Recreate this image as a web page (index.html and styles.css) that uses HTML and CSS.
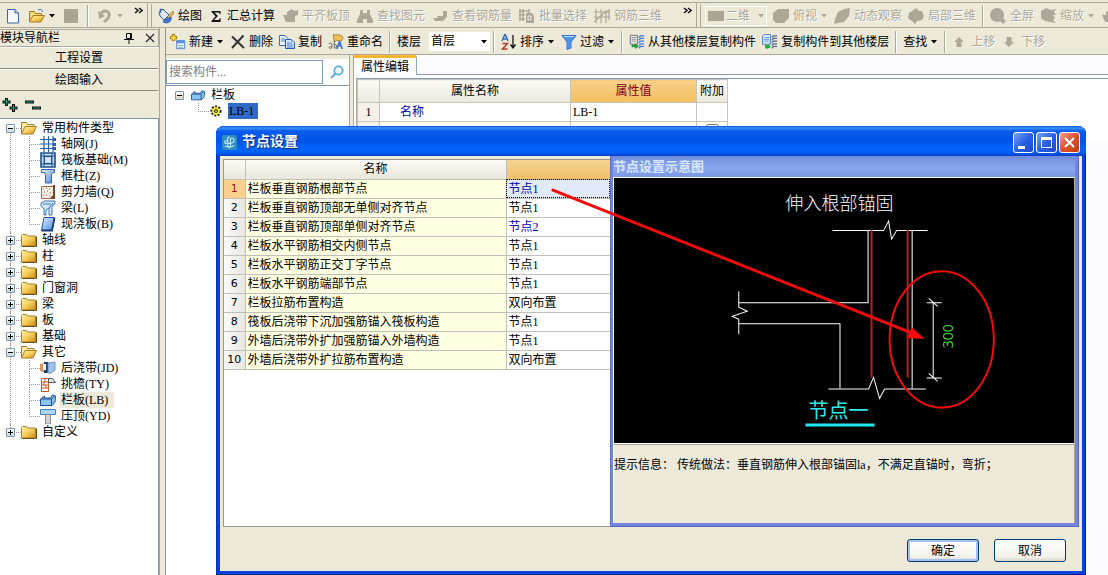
FILE: index.html
```html
<!DOCTYPE html>
<html lang="zh-CN">
<head>
<meta charset="utf-8">
<title>节点设置</title>
<link rel="stylesheet" href="styles.css">
</head>
<body>
<svg class="defs" aria-hidden="true">
  <defs>
    <linearGradient id="gold" x1="0" y1="0" x2="1" y2="1"><stop offset="0" stop-color="#fff3b0"/><stop offset=".5" stop-color="#f5cf5a"/><stop offset="1" stop-color="#c98a1c"/></linearGradient>
    <linearGradient id="blue" x1="0" y1="0" x2="1" y2="1"><stop offset="0" stop-color="#e4f2ff"/><stop offset="1" stop-color="#4a86d8"/></linearGradient>
  </defs>
  <symbol id="i-new" viewBox="0 0 16 16"><path d="M2.500 1.500h7.500l3.500 3.500v10h-11z" fill="#f4f9ff" stroke="#41649c"/><path d="M10 1.500v3.500h3.500" fill="#b8d0f0" stroke="#41649c"/></symbol>
  <symbol id="i-open" viewBox="0 0 16 16"><path d="M.5 14V3.500h5l1 2h6V8" fill="#f6d77a" stroke="#a87a1c"/><path d="M.5 14L4 7.500h11.500L12 14z" fill="url(#gold)" stroke="#a87a1c"/><path d="M9 2c3-1.500 4 0 4.500 2" fill="none" stroke="#3a68b8"/></symbol>
  <symbol id="i-folder-open" viewBox="0 0 16 14"><path d="M.5 13V1.500h5l1 2h6.500V6" fill="#fbe9a8" stroke="#a8802c"/><path d="M.5 13L4 5.500h11.500L12 13z" fill="url(#gold)" stroke="#a8802c"/></symbol>
  <symbol id="i-save" viewBox="0 0 16 16"><path d="M1 1h14v14H1z" fill="#a8a593"/></symbol>
  <symbol id="i-undo" viewBox="0 0 16 16"><path d="M4 5c5-4 9-1 8 3-.5 3-3 4-5 6" fill="none" stroke="#aca899" stroke-width="3"/><path d="M1 3l1 8 6-3z" fill="#aca899"/></symbol>
  <symbol id="i-paint" viewBox="0 0 16 16"><path d="M1 4l4-3 6 6-5 5-4-4z" fill="#dbe9fa" stroke="#345b9c"/><path d="M3 5L2 1l4 1" fill="none" stroke="#345b9c"/><path d="M15 3l-6 6 2 2 5-6z" fill="#e8b84c" stroke="#7c5a18" stroke-width=".6"/><path d="M5 14c2-4 5-4 8-5 1 3-1 6-5 6z" fill="#3f73d0" stroke="#24489a" stroke-width=".6"/></symbol>
  <symbol id="i-sum" viewBox="0 0 12 16"><path d="M1.500 3h9v3h-1L9 4.500H4.500L8 8l-4 4h5l.7-1.700h1L10.500 14h-9v-1L5.500 8.300 1.500 4z" fill="#111"/></symbol>
  <symbol id="i-g1" viewBox="0 0 16 16"><path d="M1 7h4V4l5-3 2 2 4-1v5l-3 1v6H4z" fill="#aca899"/></symbol>
  <symbol id="i-find" viewBox="0 0 16 16"><path d="M3 2h3v3h4V2h3v4l3 6v3h-6v-4H6v4H0v-3l3-6z" fill="#aca899"/></symbol>
  <symbol id="i-view" viewBox="0 0 16 16"><path d="M1 10h5l-1-2h6V3h4v6l-4 4H3z" fill="#aca899"/></symbol>
  <symbol id="i-batch" viewBox="0 0 16 16"><path d="M1 1v12M4 1v12M0 3h10M0 7h6M0 11h6M10 1v4" stroke="#aca899" stroke-width="1.500" fill="none"/><path d="M7 5h6l2 3v7H7z" fill="#aca899"/><path d="M9 8h3v4H9z" fill="none" stroke="#ece9d8"/></symbol>
  <symbol id="i-mesh" viewBox="0 0 16 16"><path d="M2 1v14M7 1v14M12 2v13M15 1v11M0 4h16M0 9h16M0 14l6-5 4-4 6-3" stroke="#aca899" stroke-width="1.200" fill="none"/></symbol>
  <symbol id="i-rect" viewBox="0 0 16 16"><path d="M0 3h16v10H0z" fill="#a8a593"/></symbol>
  <symbol id="i-cube" viewBox="0 0 16 16"><path d="M0 5l5-4h11v9l-5 5H3l-3-3z" fill="#aca899"/></symbol>
  <symbol id="i-orbit" viewBox="0 0 16 16"><path d="M16 0l-1 8-5 6-6 1-4 1 1-5L4 4l6-3z" fill="#aca899"/></symbol>
  <symbol id="i-part" viewBox="0 0 16 16"><path d="M8 0l3 3h3l2 5-2 4-5 1-2 3-3-3-4-3 1-5 3-2z" fill="#aca899"/></symbol>
  <symbol id="i-lens" viewBox="0 0 16 16"><circle cx="7" cy="7" r="7" fill="#aca899"/><path d="M9 12l3-3 4 4-3 3z" fill="#aca899"/></symbol>
  <symbol id="i-zoom" viewBox="0 0 16 16"><path d="M1 3l5-3 5 2 5-1-2 3 2 3h-3l2 3-2 2 3 3-6-1-5-1-4-3z" fill="#aca899"/></symbol>
  <symbol id="i-add" viewBox="0 0 18 18"><path d="M7.500 7.500h9v9h-9z" fill="#eaf3ff" stroke="#4a78c0"/><path d="M7.500 7.500h9v3h-9z" fill="#5a90e0"/><path d="M9 13h6M9 15h6" stroke="#8ab"/><path d="M4 0v8M0 4h8" stroke="#9a7410" stroke-width="3.600"/><path d="M4 1v6M1 4h6" stroke="#ffe23c" stroke-width="2"/></symbol>
  <symbol id="i-del" viewBox="0 0 16 16"><path d="M2 2.500L14 14M13.500 1.500L2 14" stroke="#333" stroke-width="2"/></symbol>
  <symbol id="i-copy" viewBox="0 0 16 16"><path d="M.5 1.500H6l3 3v7H.5z" fill="#e8f2ff" stroke="#3c6ab0"/><path d="M6.500 5.500H12l3.500 3v6h-9z" fill="#cfe2fb" stroke="#2a58b0"/><path d="M8 9h5M8 11h6M8 13h6M2 5h4M2 7h4" stroke="#4a7fd0"/></symbol>
  <symbol id="i-ren" viewBox="0 0 18 18"><path d="M6 1h8l3 3-2 4-5-1-3 2z" fill="#efc05a" stroke="#946418" stroke-width=".8"/><path d="M1 11c3-2 4 0 3 5-3 1-4-2 0-2M7 8v8c4 0 3-5 0-4" fill="none" stroke="#666" stroke-width="1.100"/><path d="M9 17l3-9h2l3 9h-2l-1-3h-2l-1 3z" fill="#3f7ad8"/></symbol>
  <symbol id="i-sort" viewBox="0 0 16 16"><path d="M1 7l3-7 3 7M2 5h4" fill="none" stroke="#356ab5" stroke-width="1.500"/><path d="M1.500 9.500h5l-5 5.500h5" fill="none" stroke="#b33a34" stroke-width="1.500"/><path d="M12 1v12M9.500 10.500L12 14l2.500-3.500" fill="none" stroke="#111" stroke-width="1.300"/></symbol>
  <symbol id="i-filter" viewBox="0 0 16 16"><path d="M1 1.500h14L10 8v6l-4 1.500V8z" fill="#4f94ec" stroke="#3873c8"/><path d="M3 2.500h10" stroke="#bfe0ff"/></symbol>
  <symbol id="i-from" viewBox="0 0 18 18"><path d="M1.500 1.500h8v10h-8z" fill="#e8eee8" stroke="#667"/><path d="M3 4h5M3 6h5M3 8h5" stroke="#889"/><path d="M3 12h4v-2l4 4-4 3v-2H3z" fill="#1c9a3c"/><path d="M11 4l2-2h4M11 7l2-2h4M11 10l2-2h4M11 13l2-2h4M11 16l2-2h4" stroke="#3d78d0" stroke-width="1.400" fill="none"/></symbol>
  <symbol id="i-to" viewBox="0 0 18 18"><path d="M2.500.5h7v11h-9v-9z" fill="#dceaff" stroke="#3f70c8"/><path d="M3 4h5M2 6h6M2 8h6" stroke="#5a90e0"/><path d="M4 12h4l2 3-5 2-2-3z" fill="#22aa3c"/><path d="M11 4l2-2h4M11 7l2-2h4M11 10l2-2h4M11 13l2-2h4M11 16l2-2h4" stroke="#5a6684" stroke-width="1.400" fill="none"/></symbol>
  <symbol id="i-up" viewBox="0 0 12 12"><path d="M6 1l5 5H8.500v5h-5V6H1z" fill="#aca899"/></symbol>
  <symbol id="i-down" viewBox="0 0 12 12"><path d="M6 11l5-5H8.500V1h-5v5H1z" fill="#aca899"/></symbol>
  <symbol id="i-caret" viewBox="0 0 6 4"><path d="M0 0h6L3 3.500z" fill="currentColor"/></symbol>
  <symbol id="i-more" viewBox="0 0 9 8"><path d="M1 1l3 2.500L1 6M5 1l3 2.500L5 6" fill="none" stroke="#111" stroke-width="1.500"/></symbol>
  <symbol id="i-pin" viewBox="0 0 10 12"><path d="M2.500 1.500h5v5h-5zM6.500 1v6M0 7.500h10M5 8v4" fill="none" stroke="#111"/></symbol>
  <symbol id="i-x" viewBox="0 0 10 10"><path d="M1 1l8 8M9 1L1 9" stroke="#222" stroke-width="1.100"/></symbol>
  <symbol id="i-expand" viewBox="0 0 16 16"><path d="M4.500 1v8M.5 5h8M11.500 7v8M7.500 11h8" stroke="#111" stroke-width="3"/><path d="M4.500 2v6M1.500 5h6M11.500 8v6M8.500 11h6" stroke="#1f9a78" stroke-width="1"/></symbol>
  <symbol id="i-collapse" viewBox="0 0 16 16"><path d="M0 5h9M7 11h9" stroke="#111" stroke-width="3"/><path d="M1 5h7M8 11h7" stroke="#1f9a78"/></symbol>
  <symbol id="i-search" viewBox="0 0 14 14"><circle cx="8.500" cy="5.500" r="4.200" fill="#eaf7ff" stroke="#62acdc" stroke-width="1.800"/><path d="M5.500 8.500L1 13" stroke="#62acdc" stroke-width="2.200"/></symbol>
  <symbol id="i-folder" viewBox="0 0 16 14"><path d="M.5 13V2.500l1-1h4l1 1.500h8v10z" fill="url(#gold)" stroke="#a8802c"/><path d="M1 13.500h14.500V3.500" fill="none" stroke="#6e5010"/></symbol>
  <symbol id="i-grid" viewBox="0 0 16 16"><path d="M4 0v16M8.500 0v16M13 0v16M0 3.500h14M0 8h14M0 12.500h14" stroke="#2c5cb0" stroke-width="1.200"/><path d="M13 2h3v3h-3zM13 7h3v3h-3zM13 11h3v3h-3z" fill="#2c5cb0"/></symbol>
  <symbol id="i-raft" viewBox="0 0 16 16"><path d="M1 1h14v14H1z" fill="#cfe6fa" stroke="#1c4c96" stroke-width="1.600"/><path d="M4.500 4.500h7v7h-7zM4 1v14M12 1v14M1 4h14M1 12h14" fill="none" stroke="#1c4c96"/></symbol>
  <symbol id="i-col" viewBox="0 0 16 16"><path d="M1.500 1.500h13v3h-2l-1 2V15h-6V6.500l-1-2h-3z" fill="url(#blue)" stroke="#3060b8"/></symbol>
  <symbol id="i-wall" viewBox="0 0 16 16"><path d="M1.500 2.500h12v12h-12z" fill="#fbeee4" stroke="#a36848"/><path d="M14 1v14M11 14l3-2" stroke="#7a4028" stroke-width="2"/><path d="M3 5h1M6 4h1M9 5h1M4 8h1M7 7h1M10 9h1M3 11h1M6 11h1M9 12h1" stroke="#a36848"/></symbol>
  <symbol id="i-beam" viewBox="0 0 16 16"><path d="M1 3l4-2h10v3l-3 2v9H9V8L6 10v5H4V9L1 6z" fill="#cfe6fa" stroke="#3f78b8"/><path d="M3 4h8M9 8l4-5" stroke="#3f78b8"/></symbol>
  <symbol id="i-slab" viewBox="0 0 16 16"><path d="M4 1.500h10.500L12 14.500H1.500z" fill="url(#blue)" stroke="#27529c"/><path d="M1.500 14.500H12L14.500 2" stroke="#173a7c" stroke-width="1.800" fill="none"/></symbol>
  <symbol id="i-strip" viewBox="0 0 16 16"><path d="M0 4l4-1v9l-4-1z" fill="#e09060"/><path d="M4 2h4v11H4z" fill="#283c60"/><path d="M8 3l7-1v8l-4 3H8z" fill="#9cc4ee" stroke="#5d82b4" stroke-width=".8"/><path d="M3 4h3v6H3z" fill="#fff"/></symbol>
  <symbol id="i-eave" viewBox="0 0 16 16"><path d="M1.500 2.500h7v13h-7z" fill="#fff" stroke="#c4562c"/><path d="M1 6h8M1 9h8M1 12h8M5 3v3M4 6v3M6 9v3" stroke="#c4562c"/><path d="M8.500 2.500h4l3 4h-7z" fill="#e8e4dc" stroke="#555"/></symbol>
  <symbol id="i-rail" viewBox="0 0 16 16"><path d="M.5 7l4-3v2h6l2-3 3 1-.5 6-3 3.500H.5z" fill="#8cc4f0" stroke="#1c4f90"/><path d="M1 7h10.500v6.500M11.500 7l3-3" stroke="#1c4f90" fill="none"/></symbol>
  <symbol id="i-cap" viewBox="0 0 16 16"><path d="M.5 1.500h15v5H.5z" fill="#a8d4f8" stroke="#4a7cb4"/><path d="M5.500 6.500h5V16h-5z" fill="#d4d4d4" stroke="#888"/></symbol>
  <symbol id="i-gear" viewBox="0 0 12 12"><circle cx="6" cy="6" r="4.500" fill="#f8ec30" stroke="#222" stroke-width="2.200" stroke-dasharray="1.900 1.400"/><circle cx="6" cy="6" r="3.600" fill="#f8ec30"/><circle cx="6" cy="6" r="1.500" fill="none" stroke="#222"/></symbol>
  <symbol id="i-app" viewBox="0 0 16 16"><rect width="16" height="16" rx="2" fill="#2e8cc4"/><path d="M8 2c-2 0-2 2-2 3v7c0 2 3 2 3 0V5c0-3 4-2 4 1s-5 3-8 3-3-3 0-3M3 12c4 1 8 1 10-1" fill="none" stroke="#bfeaf4" stroke-width="1.200"/></symbol>
</svg>

<main class="app">
  <div class="bar bar-top" role="toolbar" aria-label="主工具栏">
    <div class="group file-group">
      <button class="tool" aria-label="新建文件"><svg class="ico"><use href="#i-new"/></svg></button>
      <button class="tool" aria-label="打开"><svg class="ico"><use href="#i-open"/></svg><svg class="caret"><use href="#i-caret"/></svg></button>
      <button class="tool" aria-label="保存" disabled><svg class="ico"><use href="#i-save"/></svg></button>
      <span class="sep"></span>
      <button class="tool" aria-label="撤销" disabled><svg class="ico"><use href="#i-undo"/></svg><svg class="caret"><use href="#i-caret"/></svg></button>
      <button class="more" aria-label="更多"><svg class="chev"><use href="#i-more"/></svg></button>
    </div>
    <div class="group draw-group">
      <button class="tool"><svg class="ico"><use href="#i-paint"/></svg>绘图</button>
      <button class="tool"><svg class="sigma"><use href="#i-sum"/></svg>汇总计算</button>
      <button class="tool" disabled><svg class="ico"><use href="#i-g1"/></svg>平齐板顶</button>
      <button class="tool" disabled><svg class="ico"><use href="#i-find"/></svg>查找图元</button>
      <button class="tool" disabled><svg class="ico"><use href="#i-view"/></svg>查看钢筋量</button>
      <button class="tool" disabled><svg class="ico"><use href="#i-batch"/></svg>批量选择</button>
      <button class="tool" disabled><svg class="ico"><use href="#i-mesh"/></svg>钢筋三维</button>
      <button class="more" aria-label="更多"><svg class="chev"><use href="#i-more"/></svg></button>
    </div>
    <div class="group view-group">
      <button class="tool boxed" disabled><svg class="ico"><use href="#i-rect"/></svg>二维<svg class="caret"><use href="#i-caret"/></svg></button>
      <button class="tool" disabled><svg class="ico"><use href="#i-cube"/></svg>俯视<svg class="caret"><use href="#i-caret"/></svg></button>
      <button class="tool" disabled><svg class="ico"><use href="#i-orbit"/></svg>动态观察</button>
      <button class="tool" disabled><svg class="ico"><use href="#i-part"/></svg>局部三维</button>
      <span class="sep"></span>
      <button class="tool" disabled><svg class="ico"><use href="#i-lens"/></svg>全屏</button>
      <button class="tool" disabled><svg class="ico"><use href="#i-zoom"/></svg>缩放<svg class="caret"><use href="#i-caret"/></svg></button>
      <button class="tool" disabled aria-label="平移"><svg class="ico"><use href="#i-g1"/></svg></button>
    </div>
  </div>

  <div class="work">
    <aside class="nav">
      <header class="nav-title"><span class="nav-name">模块导航栏</span><button class="mini" aria-label="固定"><svg class="pin"><use href="#i-pin"/></svg></button><button class="mini" aria-label="关闭"><svg class="cross"><use href="#i-x"/></svg></button></header>
      <button class="section">工程设置</button>
      <button class="section">绘图输入</button>
      <div class="nav-tools"><button class="mini" aria-label="全部展开"><svg class="ico"><use href="#i-expand"/></svg></button><button class="mini" aria-label="全部折叠"><svg class="ico"><use href="#i-collapse"/></svg></button></div>
      <ul class="tree main-tree">
        <li><div class="row"><button class="toggle" aria-label="折叠"></button><svg class="ico"><use href="#i-folder-open"/></svg><span>常用构件类型</span></div>
          <ul>
            <li><svg class="ico"><use href="#i-grid"/></svg><span>轴网(J)</span></li>
            <li><svg class="ico"><use href="#i-raft"/></svg><span>筏板基础(M)</span></li>
            <li><svg class="ico"><use href="#i-col"/></svg><span>框柱(Z)</span></li>
            <li><svg class="ico"><use href="#i-wall"/></svg><span>剪力墙(Q)</span></li>
            <li><svg class="ico"><use href="#i-beam"/></svg><span>梁(L)</span></li>
            <li><svg class="ico"><use href="#i-slab"/></svg><span>现浇板(B)</span></li>
          </ul></li>
        <li><div class="row"><button class="toggle plus" aria-label="展开"></button><svg class="ico"><use href="#i-folder"/></svg><span>轴线</span></div></li>
        <li><div class="row"><button class="toggle plus" aria-label="展开"></button><svg class="ico"><use href="#i-folder"/></svg><span>柱</span></div></li>
        <li><div class="row"><button class="toggle plus" aria-label="展开"></button><svg class="ico"><use href="#i-folder"/></svg><span>墙</span></div></li>
        <li><div class="row"><button class="toggle plus" aria-label="展开"></button><svg class="ico"><use href="#i-folder"/></svg><span>门窗洞</span></div></li>
        <li><div class="row"><button class="toggle plus" aria-label="展开"></button><svg class="ico"><use href="#i-folder"/></svg><span>梁</span></div></li>
        <li><div class="row"><button class="toggle plus" aria-label="展开"></button><svg class="ico"><use href="#i-folder"/></svg><span>板</span></div></li>
        <li><div class="row"><button class="toggle plus" aria-label="展开"></button><svg class="ico"><use href="#i-folder"/></svg><span>基础</span></div></li>
        <li><div class="row"><button class="toggle" aria-label="折叠"></button><svg class="ico"><use href="#i-folder-open"/></svg><span>其它</span></div>
          <ul>
            <li><svg class="ico"><use href="#i-strip"/></svg><span>后浇带(JD)</span></li>
            <li><svg class="ico"><use href="#i-eave"/></svg><span>挑檐(TY)</span></li>
            <li><svg class="ico"><use href="#i-rail"/></svg><span class="current">栏板(LB)</span></li>
            <li><svg class="ico"><use href="#i-cap"/></svg><span>压顶(YD)</span></li>
          </ul></li>
        <li><div class="row"><button class="toggle plus" aria-label="展开"></button><svg class="ico"><use href="#i-folder"/></svg><span>自定义</span></div></li>
      </ul>
    </aside>

    <section class="content">
      <div class="bar bar-edit" role="toolbar" aria-label="构件工具栏">
        <button class="tool"><svg class="ico"><use href="#i-add"/></svg>新建<svg class="caret"><use href="#i-caret"/></svg></button>
        <button class="tool"><svg class="ico"><use href="#i-del"/></svg>删除</button>
        <button class="tool"><svg class="ico"><use href="#i-copy"/></svg>复制</button>
        <button class="tool"><svg class="ico"><use href="#i-ren"/></svg>重命名</button>
        <span class="sep"></span>
        <label class="floor-label" for="floor">楼层</label>
        <span class="pick"><select id="floor"><option>首层</option></select><svg class="caret"><use href="#i-caret"/></svg></span>
        <span class="sep"></span>
        <button class="tool"><svg class="ico"><use href="#i-sort"/></svg>排序<svg class="caret"><use href="#i-caret"/></svg></button>
        <button class="tool"><svg class="ico"><use href="#i-filter"/></svg>过滤<svg class="caret"><use href="#i-caret"/></svg></button>
        <span class="sep"></span>
        <button class="tool"><svg class="ico"><use href="#i-from"/></svg>从其他楼层复制构件</button>
        <button class="tool"><svg class="ico"><use href="#i-to"/></svg>复制构件到其他楼层</button>
        <span class="sep"></span>
        <button class="tool">查找<svg class="caret"><use href="#i-caret"/></svg></button>
        <span class="sep"></span>
        <button class="tool move" disabled><svg class="arrow"><use href="#i-up"/></svg>上移</button>
        <button class="tool move" disabled><svg class="arrow"><use href="#i-down"/></svg>下移</button>
      </div>
      <div class="panes">
        <div class="parts">
          <div class="search"><input type="text" placeholder="搜索构件..." aria-label="搜索构件"><button class="mini" aria-label="搜索"><svg class="glass"><use href="#i-search"/></svg></button></div>
          <ul class="tree part-tree">
            <li><div class="row"><button class="toggle" aria-label="折叠"></button><svg class="ico"><use href="#i-rail"/></svg><span>栏板</span></div>
              <ul><li><svg class="gear"><use href="#i-gear"/></svg><span class="picked">LB-1</span></li></ul></li>
          </ul>
        </div>
        <div class="props">
          <div class="tabs"><button class="tab">属性编辑</button></div>
          <div class="sheet">
            <table class="prop-table">
              <thead><tr><th class="c-no"></th><th class="c-name">属性名称</th><th class="c-val active">属性值</th><th class="c-add">附加</th></tr></thead>
              <tbody>
                <tr><th class="c-no">1</th><td class="link">名称</td><td>LB-1</td><td></td></tr>
                <tr><th class="c-no"></th><td></td><td></td><td class="check"><input type="checkbox" aria-label="附加"></td></tr>
              </tbody>
            </table>
          </div>
        </div>
      </div>
    </section>
  </div>

  <section class="dialog" role="dialog" aria-labelledby="dlg-title">
    <header class="dlg-bar">
      <svg class="app-ico"><use href="#i-app"/></svg><h1 id="dlg-title">节点设置</h1>
      <button class="win" aria-label="最小化"><svg viewBox="0 0 19 19"><path d="M4 13h7v3H4z" fill="#fff"/></svg></button>
      <button class="win" aria-label="最大化"><svg viewBox="0 0 19 19"><path d="M4.500 5.500h10v9h-10zM4 5h11" fill="none" stroke="#fff"/><path d="M4 4h11v3H4z" fill="#fff"/></svg></button>
      <button class="win close" aria-label="关闭"><svg viewBox="0 0 19 19"><path d="M5 5l9 9M14 5l-9 9" stroke="#fff" stroke-width="2.200"/></svg></button>
    </header>
    <div class="dlg-body">
      <div class="node-box">
        <table class="node-table">
          <thead><tr><th class="n-no"></th><th class="n-name">名称</th><th class="active"></th></tr></thead>
          <tbody>
            <tr><th class="on">1</th><td class="name">栏板垂直钢筋根部节点</td><td class="focus link">节点1</td></tr>
            <tr><th>2</th><td class="name">栏板垂直钢筋顶部无单侧对齐节点</td><td>节点1</td></tr>
            <tr><th>3</th><td class="name">栏板垂直钢筋顶部单侧对齐节点</td><td class="link">节点2</td></tr>
            <tr><th>4</th><td class="name">栏板水平钢筋相交内侧节点</td><td>节点1</td></tr>
            <tr><th>5</th><td class="name">栏板水平钢筋正交丁字节点</td><td>节点1</td></tr>
            <tr><th>6</th><td class="name">栏板水平钢筋端部节点</td><td>节点1</td></tr>
            <tr><th>7</th><td class="name">栏板拉筋布置构造</td><td>双向布置</td></tr>
            <tr><th>8</th><td class="name">筏板后浇带下沉加强筋锚入筏板构造</td><td>节点1</td></tr>
            <tr><th>9</th><td class="name">外墙后浇带外扩加强筋锚入外墙构造</td><td>节点1</td></tr>
            <tr><th>10</th><td class="name">外墙后浇带外扩拉筋布置构造</td><td>双向布置</td></tr>
          </tbody>
        </table>
      </div>
      <section class="preview">
        <h2>节点设置示意图</h2>
        <div class="canvas">
          <svg class="drawing" viewBox="0 0 459 264">
            <text class="cad-title" x="171" y="32">伸入根部锚固</text>
            <g class="cad">
              <path d="M218 52.500H269L274 43L277 61L282 52.500H313"/>
              <path d="M253.500 52V124.500H124.500M297.500 52V210M124.500 145.500H225.500V210"/>
              <path d="M124.500 113V129L133 133L118 138L124.500 141V156"/>
              <path d="M214 210.500H254L259 199L265 220L270 210.500H311"/>
              <path d="M318.500 124V199M312 124.500H327M312 199.500H327M314 120L323 128M314 195L323 203"/>
            </g>
            <path class="rebar" d="M257 52V199M293 52V199"/>
            <text class="cad-dim" transform="translate(338 170) rotate(-90)">300</text>
            <text class="cad-label" x="194" y="239">节点一</text>
            <path class="cad-under" d="M191 246.500H260"/>
            <ellipse class="mark" cx="327" cy="161" rx="52" ry="68"/>
            <path class="mark arrow-line" d="M-61 12L298 155"/>
            <path class="arrow-head" d="M310 160.500L293 160L297 149z"/>
          </svg>
        </div>
        <p class="tip">提示信息： 传统做法：垂直钢筋伸入根部锚固la，不满足直锚时，弯折；</p>
      </section>
    </div>
    <footer class="dlg-foot"><button class="btn primary">确定</button><button class="btn">取消</button></footer>
  </section>
</main>
</body>
</html>
```

FILE: styles.css
```css
* { box-sizing: border-box; }

body {
  margin: 0;
  background: #ece9d8;
  color: #000;
  font: 12px/16px "Liberation Serif", "Noto Sans CJK SC", sans-serif;
}

button, input, select { font: inherit; color: inherit; }
button { background: none; border: 0; padding: 0; margin: 0; white-space: nowrap; }
ul { list-style: none; margin: 0; padding: 0; }
table { border-collapse: collapse; table-layout: fixed; }
svg { flex: none; display: block; }

.defs { position: absolute; width: 0; height: 0; }
.ico { width: 16px; height: 16px; }
.caret { width: 6px; height: 4px; }
.chev { width: 9px; height: 8px; }
.sigma { width: 14px; height: 16px; }
.arrow { width: 12px; height: 12px; }
.pin { width: 10px; height: 12px; }
.cross { width: 10px; height: 10px; }
.glass { width: 14px; height: 14px; }
.gear { width: 12px; height: 12px; }

.app {
  position: relative;
  display: flex;
  flex-direction: column;
  height: 100vh;
  min-height: 540px;
  overflow: hidden;
}

/* toolbars */
.bar { display: flex; align-items: center; background: #ece9d8; white-space: nowrap; overflow: hidden; flex: none; }
.bar-top { height: 28px; padding-top: 2px; border-bottom: 1px solid #aca899; }
.group {
  display: flex;
  align-items: center;
  gap: 7px;
  height: 25px;
  flex: none;
  padding-top: 1px;
  border-top: 1px solid #aca899;
  border-right: 1px solid #aca899;
}
.file-group { width: 148px; gap: 8px; padding-left: 5px; }
.draw-group { width: 549px; }
.view-group { flex: 1 0 auto; border-right: 0; gap: 6px; }
.draw-group::before, .view-group::before { content: ""; width: 1px; height: 24px; margin-left: 3px; background: #aca899; }
.view-group::before { margin-right: -2px; }
.draw-group::before { margin-right: -1px; }
.more { margin: 3px 4px 0 auto; align-self: flex-start; }
.tool { display: flex; align-items: center; gap: 4px; height: 22px; flex: none; }
.tool:disabled { color: #aca899; text-shadow: 1px 1px #fff; }
.boxed { border: 1px solid #fff; height: 20px; padding: 0 2px; gap: 2px; }
.boxed .caret { margin-left: 6px; }
.view-group .tool .caret { margin-right: 1px; }
.view-group .boxed .caret { margin-right: 0; }
.sep { width: 2px; height: 22px; flex: none; border-left: 1px solid #aca899; border-right: 1px solid #fff; }

.bar-edit { height: 27px; padding: 1px 0 0 4px; gap: 6px; border-bottom: 1px solid #aca899; }
.bar-edit .tool { gap: 3px; }
.bar-edit .tool .caret { margin: 0 1px; }
.bar-edit .move { gap: 6px; padding: 0 1px; }
.pick { position: relative; display: block; width: 61px; margin-right: -3px; margin-left: 2px; }
.pick select { display: block; appearance: none; width: 100%; height: 19px; padding: 0 2px; border: 0; border-radius: 0; background: #fff; line-height: 17px; }
.pick .caret { position: absolute; right: 3px; top: 8px; pointer-events: none; }

/* layout */
.work { display: flex; flex: 1; min-height: 0; }
.nav { width: 160px; flex: none; display: flex; flex-direction: column; border-right: 1px solid #aca899; }
.content { flex: 1; min-width: 0; margin-left: 5px; display: flex; flex-direction: column; border-left: 1px solid #8296a8; }
.panes { flex: 1; display: flex; min-height: 0; }

/* module navigator */
.nav-title { display: flex; align-items: center; gap: 11px; height: 18px; margin-top: 1px; padding-right: 3px; border: 1px solid #aca899; border-left: 0; }
.nav-name { flex: 1; }
.mini { display: block; }
.section { height: 22px; line-height: 20px; margin-right: 1px; border-top: 1px solid #fff; border-bottom: 1px solid #8c897c; text-align: center; }
.nav-tools { display: flex; gap: 7px; padding: 6px 2px; height: 27px; }
.main-tree { flex: 1; padding-top: 1px; background: #fff; border-top: 1px solid #8296a8; border-right: 1px solid #8296a8; overflow: hidden; }

.tree li { position: relative; }
.tree .row, .tree li li { display: flex; align-items: center; height: 16px; line-height: 16px; white-space: nowrap; }
.row { padding-left: 6px; }
.row .ico { margin-left: 6px; height: 14px; }
.row span { margin-left: 5px; }
.row .toggle { position: relative; z-index: 1; width: 9px; height: 9px; border: 1px solid #7d94b0; border-radius: 1px; background: linear-gradient(#fff, #d8d4c8); }
.toggle::before, .toggle.plus::after { content: ""; position: absolute; background: #000; left: 1px; top: 3px; width: 5px; height: 1px; }
.toggle.plus::after { left: 3px; top: 1px; width: 1px; height: 5px; }
.tree > li::before { content: ""; position: absolute; left: 10px; top: 0; bottom: 0; border-left: 1px dotted #999; }
.tree > li:first-child::before { top: 8px; }
.tree > li:last-child::before { bottom: auto; height: 8px; }
.row::after { content: ""; position: absolute; left: 16px; top: 8px; width: 5px; border-top: 1px dotted #999; }
.tree li li { padding-left: 40px; }
.tree li li span { margin-left: 4px; padding: 0 1px; }
.tree li li::before { content: ""; position: absolute; left: 29px; top: 0; width: 10px; height: 8px; border-left: 1px dotted #999; border-bottom: 1px dotted #999; }
.tree li li:not(:last-child)::after { content: ""; position: absolute; left: 29px; top: 8px; height: 8px; border-left: 1px dotted #999; }
.tree .current { background: #ece9d8; padding-right: 6px; }

/* component list */
.parts { width: 184px; flex: none; display: flex; flex-direction: column; padding-top: 4px; border-right: 1px solid #aca899; }
.search { display: flex; align-items: center; height: 26px; padding-right: 5px; gap: 7px; background: #fff; }
.search input { flex: 1; min-width: 0; height: 24px; padding: 0 2px; border: 1px solid #7f9db9; background: #fff; outline: 0; line-height: 20px; }
.search input::placeholder { color: #808080; opacity: 1; }
.part-tree { flex: 1; background: #fff; border-top: 1px solid #8296a8; padding: 1px 0 0 3px; }
.part-tree > li > .row::after { display: none; }
.part-tree > li::before { display: none; }
.part-tree li li { padding-left: 41px; }
.tree .picked { background: #316ac5; padding: 0 4px 0 1px; margin-left: 6px; }

/* property editor */
.props { flex: 1; min-width: 0; margin-left: 3px; background: #fcfcfe; border-left: 1px solid #aca899; }
.tabs { height: 20px; border-bottom: 1px solid #8c9aa8; }
.tab { height: 20px; padding: 0 7px; margin-left: -1px; border: 1px solid #91a7b4; border-top: 3px solid #ffb62c; border-bottom: 0; border-radius: 2px 2px 0 0; background: #fcfcfe; line-height: 14px; }
.sheet { margin: 3px 0 0 2px; border-top: 1px solid #7f9db9; border-left: 1px solid #aca899; background: #fff; }
.prop-table { width: 370px; }
.prop-table th, .prop-table td { height: 19px; padding: 0 2px; border: 1px solid #c8c5b8; text-align: left; font-weight: normal; line-height: 16px; }
.prop-table thead th { height: 23px; text-align: center; background: linear-gradient(#fbfaf6, #ebe8dd); padding: 0; }
.prop-table tbody th { background: #f3f1e9; text-align: center; }
.c-no { width: 22px; }
.c-name { width: 191px; }
.c-val { width: 126px; }
.c-add { width: 31px; }
.prop-table thead .active { background: linear-gradient(#f9d08a, #f3c060); color: #800020; }
.prop-table td.link { padding-left: 20px; }
.link { color: #0000b4; }
.prop-table .check { text-align: center; }
.check input { width: 13px; height: 13px; margin: 1px 0 0; vertical-align: top; }

/* dialog window */
.dialog {
  position: absolute;
  inset: 126px 22px 0 216px;
  display: flex;
  flex-direction: column;
  padding: 0 4px 4px;
  border-radius: 8px 8px 0 0;
  background: #0842d8;
  box-shadow: inset 1px 0 #0a2fc0, inset -1px -1px #001ea0;
}
.dlg-bar {
  display: flex;
  align-items: center;
  gap: 2px;
  height: 30px;
  flex: none;
  margin: 0 -4px;
  padding: 2px 6px 0 6px;
  border-radius: 8px 8px 0 0;
  background: linear-gradient(#0a50d8 0, #3a94ff 2px, #0a5cec 5px, #0054e6 14px, #0064fc 22px, #0062fa 26px, #0040c8 30px);
}
.app-ico { width: 15px; height: 15px; }
.dlg-bar h1 { flex: 1; margin: 0 0 0 3px; font-size: 14px; line-height: 20px; font-weight: bold; color: #fff; text-shadow: 1px 1px #0a2880; }
.win { width: 21px; height: 21px; border: 1px solid #fff; border-radius: 3px; background: linear-gradient(135deg, #7aa4f8, #2a60e4 50%, #1c4cd0); }
.win.close { background: linear-gradient(135deg, #f0a088, #e0502c 50%, #c03c18); }
.dlg-body { flex: 1; min-height: 0; display: grid; grid-template-columns: 387fr 469fr; background: #ece9d8; padding: 0 3px; }
.node-box { margin-top: 3px; border: 1px solid #9a9a8c; border-right: 0; background: #fff; overflow: hidden; min-width: 0; }
.node-table { width: 100%; }
.node-table th, .node-table td { height: 19px; padding: 0 2px; border: 1px solid #c0c0b8; border-left: 0; border-top: 0; line-height: 18px; text-align: left; font-weight: normal; white-space: nowrap; overflow: hidden; }
.node-table td:last-child, .node-table th:last-child { border-right: 0; }
.node-table th { text-align: center; padding: 0; background: linear-gradient(#fbfaf6, #e9e6da); }
.node-table tbody th { font-family: "DejaVu Sans", sans-serif; font-size: 11px; background: linear-gradient(90deg, #fafafa, #e8e6e0); }
.node-table tbody th.on { background: #fad08c; color: #902010; }
.node-table th.active { background: linear-gradient(#f6d294, #f0bf68); }
.n-no { width: 21px; }
.n-name { width: 261px; }
.node-table .name { background: #ffffe1; }
.node-table .focus { background: #e0eaf8; outline: 1px dotted #000; outline-offset: -1px; }

.preview { position: relative; display: flex; flex-direction: column; min-width: 0; padding: 0 4px 4px 3px; background: #7486dc; box-shadow: inset 1px 0 #6070c8, inset -1px -1px #5c68c0; }
.preview h2 { margin: 0; height: 21px; line-height: 21px; font-size: 13px; font-weight: bold; color: #d8e6fc; background: linear-gradient(#6f8cdc, #8aa6ec 60%, #7b97e4); }
.canvas { flex: none; border: 1px solid #fff; border-right-color: #aca899; background: #000; }
.drawing { width: 100%; height: auto; overflow: visible; }
.tip { flex: 1; margin: 0; padding: 12px 0; background: #ece9d8; border-top: 1px solid #aca899; border-left: 1px solid #fff; border-right: 1px solid #aca899; }

.cad { fill: none; stroke: #fff; stroke-width: 1; }
.cad-title { font-size: 18px; fill: #fff; font-weight: 300; }
.cad-dim { font: 14px "Open Sans", sans-serif; fill: #4ad848; }
.cad-label { font-size: 20px; fill: #30e8e8; }
.cad-under { stroke: #20e8f0; stroke-width: 3; }
.rebar { stroke: #b82020; stroke-width: 2; }
.mark { fill: none; stroke: #ee0c0c; stroke-width: 2; }
.arrow-line { stroke-width: 3; stroke-linecap: round; }
.arrow-head { fill: #ff0808; }

.dlg-foot { display: flex; justify-content: flex-end; gap: 15px; height: 44px; flex: none; padding: 12px 16px 0; background: #ece9d8; }
.btn { width: 72px; height: 23px; border: 1px solid #003c74; border-radius: 3px; background: linear-gradient(#fff, #f2f1ea 80%, #dcd8cc); line-height: 20px; }
.primary { box-shadow: inset 0 0 0 2px #a4bff0; }
```
